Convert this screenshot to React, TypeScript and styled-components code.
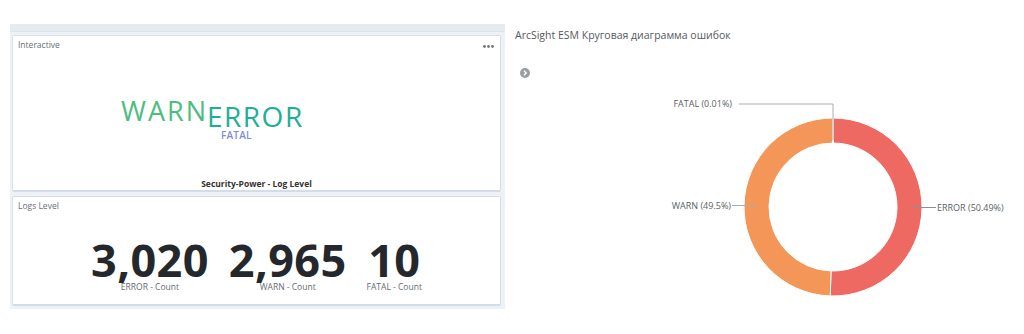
import React from "react";
import styled, { createGlobalStyle } from "styled-components";

const GlobalStyle = createGlobalStyle`
  html, body {
    margin: 0;
    padding: 0;
    background: #ffffff;
    font-family: "Open Sans", "Liberation Sans", sans-serif;
  }
`;

const Page = styled.div`
  display: flex;
  width: 1024px;
  height: 334px;
  overflow: hidden;
`;

const Dashboard = styled.div`
  margin: 24px 0 0 10px;
  width: 495px;
  height: 285px;
  box-sizing: border-box;
  background: #eef2f6;
  display: flex;
  flex-direction: column;
`;

const Strip = styled.div`
  height: 7px;
  background: #e6ebf0;
  border-bottom: 1px solid #dde4eb;
`;

const Stack = styled.div`
  display: flex;
  flex-direction: column;
  gap: 4px;
  padding: 3px 4px 0 2px;
`;

const Card = styled.div<{ $height: number }>`
  height: ${(p) => p.$height}px;
  box-sizing: border-box;
  background: #ffffff;
  border: 1px solid #d6dfe8;
  border-bottom: 2px solid #d3dde7;
  border-radius: 2px;
  display: flex;
  flex-direction: column;
`;

const CardHead = styled.div`
  display: flex;
  justify-content: space-between;
  align-items: flex-start;
  padding: 3px 5px 0 5px;
  height: 14px;
`;

const CardTitle = styled.span`
  font-size: 8.5px;
  color: #6a6f75;
  line-height: 12px;
`;

const Dots = styled.svg`
  margin-top: 6px;
  margin-right: 1px;
`;

const Cloud = styled.div`
  position: relative;
  flex: 1;
`;

const Word = styled.span<{ $x: number; $y: number; $size: number; $color: string; $track: number; $weight?: number }>`
  position: absolute;
  left: ${(p) => p.$x}px;
  top: ${(p) => p.$y}px;
  font-size: ${(p) => p.$size}px;
  line-height: 1;
  color: ${(p) => p.$color};
  letter-spacing: ${(p) => p.$track}px;
  font-weight: ${(p) => p.$weight ?? 400};
  white-space: nowrap;
`;

const CardFoot = styled.div`
  text-align: center;
  font-size: 8.5px;
  font-weight: 700;
  color: #333;
  line-height: 12px;
`;

const Metrics = styled.div`
  display: flex;
  justify-content: center;
  gap: 20px;
  margin-top: 26px;
`;

const Metric = styled.div`
  display: flex;
  flex-direction: column;
  align-items: center;
`;

const Value = styled.div`
  font-size: 45px;
  font-weight: 700;
  color: #24272b;
  line-height: 40px;
  letter-spacing: 0.4px;
`;

const Caption = styled.div`
  font-size: 8.5px;
  color: #666b70;
  line-height: 10px;
  margin-top: 2px;
`;

const ChartPanel = styled.div`
  flex: 1;
  margin-left: 1px;
  display: flex;
  flex-direction: column;
`;

const ChartHead = styled.div`
  padding: 28px 0 0 9px;
  height: 85px;
  flex-shrink: 0;
  box-sizing: border-box;
`;

const ChartTitle = styled.div`
  font-size: 10.5px;
  color: #555a60;
  line-height: 14px;
`;

const NextIcon = styled.svg`
  display: block;
  margin: 26px 0 0 5px;
`;

const Label = styled.text`
  font-family: "Open Sans", "Liberation Sans", sans-serif;
  font-size: 9px;
  fill: #5a5f65;
`;

const CX = 833;
const CY = 207;
const RO = 89;
const RI = 64;

function pt(r: number, a: number) {
  const rad = (a * Math.PI) / 180;
  return [CX + r * Math.sin(rad), CY - r * Math.cos(rad)];
}

function ring(a0: number, a1: number) {
  const large = a1 - a0 > 180 ? 1 : 0;
  const [x0, y0] = pt(RO, a0);
  const [x1, y1] = pt(RO, a1);
  const [x2, y2] = pt(RI, a1);
  const [x3, y3] = pt(RI, a0);
  return `M${x0} ${y0} A${RO} ${RO} 0 ${large} 1 ${x1} ${y1} L${x2} ${y2} A${RI} ${RI} 0 ${large} 0 ${x3} ${y3} Z`;
}

const slices = [
  { name: "ERROR", share: 50.49, color: "#ef6963" },
  { name: "WARN", share: 49.5, color: "#f49657" },
  { name: "FATAL", share: 0.01, color: "#f4b25c" },
];

const counts = [
  { value: "3,020", label: "ERROR - Count" },
  { value: "2,965", label: "WARN - Count" },
  { value: "10", label: "FATAL - Count" },
];

const Donut: React.FC = () => {
  let start = 0;
  const paths = slices.map((s) => {
    const end = start + (s.share / 100) * 360;
    const d = ring(start, end);
    start = end;
    return <path key={s.name} d={d} fill={s.color} stroke="#fff" strokeWidth={1} />;
  });

  return (
    <svg width={518} height={249} viewBox="506 85 518 249">
      {paths}
      <polyline points="739,104 833,104 833,140" fill="none" stroke="#a9adb2" strokeWidth={1} />
      <line x1={732} y1={205.5} x2={757} y2={205.5} stroke="#a9adb2" strokeWidth={1} />
      <line x1={911} y1={207.5} x2={936} y2={207.5} stroke="#8c9096" strokeWidth={1} />
      <Label x={732} y={107} textAnchor="end">FATAL (0.01%)</Label>
      <Label x={731} y={209} textAnchor="end">WARN (49.5%)</Label>
      <Label x={937} y={211}>ERROR (50.49%)</Label>
    </svg>
  );
};

const App: React.FC = () => {
  return (
    <Page>
      <GlobalStyle />
      <Dashboard>
        <Strip />
        <Stack>
          <Card $height={157}>
            <CardHead>
              <CardTitle>Interactive</CardTitle>
              <Dots width={11} height={3} viewBox="0 0 11 3">
                <circle cx={1.5} cy={1.5} r={1.4} fill="#777" />
                <circle cx={5.5} cy={1.5} r={1.4} fill="#777" />
                <circle cx={9.5} cy={1.5} r={1.4} fill="#777" />
              </Dots>
            </CardHead>
            <Cloud>
              <Word $x={108} $y={44} $size={27} $color="#4dbd7f" $track={2}>
                WARN
              </Word>
              <Word $x={194} $y={49} $size={28} $color="#1eaf97" $track={1.5}>
                ERROR
              </Word>
              <Word $x={208} $y={77} $size={10} $color="#7d8ed8" $track={0.2} $weight={600}>
                FATAL
              </Word>
            </Cloud>
            <CardFoot>Security-Power - Log Level</CardFoot>
          </Card>
          <Card $height={110}>
            <CardHead>
              <CardTitle>Logs Level</CardTitle>
            </CardHead>
            <Metrics>
              {counts.map((c) => (
                <Metric key={c.label}>
                  <Value>{c.value}</Value>
                  <Caption>{c.label}</Caption>
                </Metric>
              ))}
            </Metrics>
          </Card>
        </Stack>
      </Dashboard>
      <ChartPanel>
        <ChartHead>
          <ChartTitle>ArcSight ESM Круговая диаграмма ошибок</ChartTitle>
          <NextIcon width={10} height={10} viewBox="0 0 10 10">
            <circle cx={5} cy={5} r={5} fill="#9a9ea3" />
            <polyline points="4,2.8 6.2,5 4,7.2" fill="none" stroke="#fff" strokeWidth={1.4} />
          </NextIcon>
        </ChartHead>
        <Donut />
      </ChartPanel>
    </Page>
  );
};

export default App;
